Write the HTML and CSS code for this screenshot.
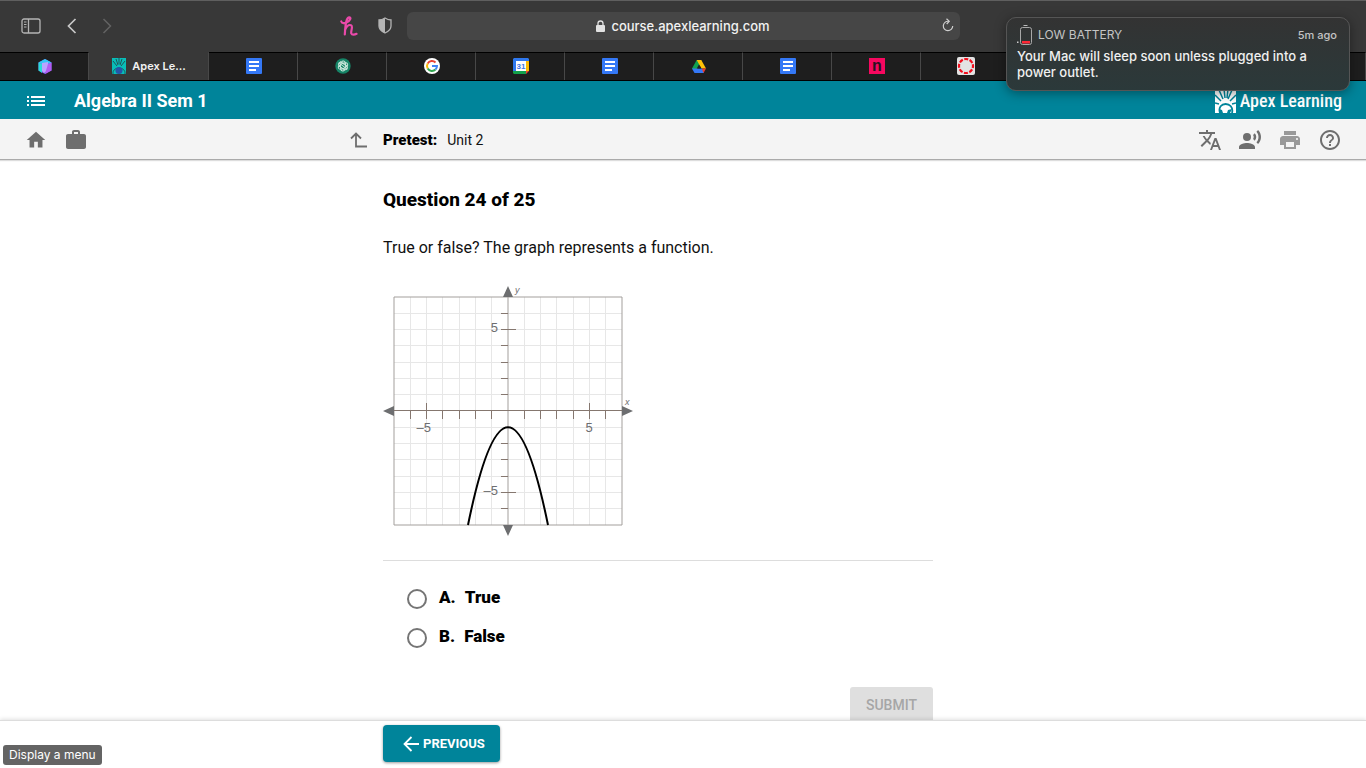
FILE: index.html
```html
<!DOCTYPE html>
<html lang="en">
<head>
<meta charset="utf-8">
<title>Apex Learning - Pretest: Unit 2</title>
<meta name="viewport" content="width=device-width, initial-scale=1">
<link rel="stylesheet" href="styles.css">
</head>
<body>
<svg class="defs" aria-hidden="true">
  <symbol id="docs" viewBox="0 0 16 16"><rect width="16" height="16" rx="1" fill="#3478f6"/><path d="M3 3h10v2H3zM3 7h10v2H3zM3 11h7v2H3z" fill="#fff"/></symbol>
</svg>

<header class="browser">
  <div class="toolbar">
    <div class="tools">
      <button class="tool" aria-label="Show sidebar"><svg width="20" height="16" viewBox="0 0 20 16" fill="none" stroke="#b4b4b4"><rect x="1" y="1" width="18" height="14" rx="2" stroke-width="1.3"/><path d="M7.500 1v14" stroke-width="1.3"/><path d="M3 4h2.500M3 6.500h2.500M3 9h2.500"/></svg></button>
      <button class="tool back" aria-label="Back"><svg width="10" height="16" viewBox="0 0 10 16" fill="none" stroke="#c8c8c8" stroke-width="1.700"><path d="M8.500 1L1.500 8l7 7"/></svg></button>
      <button class="tool forward" aria-label="Forward"><svg width="10" height="16" viewBox="0 0 10 16" fill="none" stroke="#626262" stroke-width="1.500"><path d="M1.500 1l7 7-7 7"/></svg></button>
      <button class="tool honey" aria-label="Honey"><svg width="18" height="20" viewBox="0 0 18 20" fill="none" stroke="#ea4aaa" stroke-width="2.200" stroke-linecap="round" stroke-linejoin="round"><path d="M1.300 5.500c.7 2 3.200 2.200 5.700.8 3-1.600 4.500-4.800 2.500-5C6.500 1 5.500 7 4.800 18.500M5 14c1.500-3.500 4-5.500 6-4.800 2.500 1-.5 6 .3 8.300.6 1.700 3.500 1.300 5.200.3" /></svg></button>
      <button class="tool shield" aria-label="Privacy report"><svg width="14" height="17" viewBox="0 0 14 17"><path d="M7 1c2 1.300 4 2 6 2v6c0 3-2.500 5.500-6 7-3.500-1.500-6-4-6-7V3c2 0 4-.7 6-2z" fill="none" stroke="#b4b4b4" stroke-width="1.300"/><path d="M7 1v15c-3.500-1.500-6-4-6-7V3c2 0 4-.7 6-2z" fill="#b4b4b4"/></svg></button>
    </div>
    <div class="address">
      <svg width="9" height="12" viewBox="0 0 9 12"><rect x="0" y="5" width="9" height="7" rx="1" fill="#e2e2e2"/><path d="M2 5V3.500a2.500 2.500 0 0 1 5 0V5" fill="none" stroke="#e2e2e2" stroke-width="1.300"/></svg>
      <span>course.apexlearning.com</span>
      <button class="tool reload" aria-label="Reload"><svg width="12" height="14" viewBox="0 0 12 14" fill="none" stroke="#cfcfcf" stroke-width="1.200"><path d="M6.500 3.300A4.700 4.700 0 1 0 10.700 8M4.500.8l2.700 2.500L4.700 6"/></svg></button>
    </div>
  </div>
  <nav class="tabs" aria-label="Tabs">
    <div class="tab"><svg width="14" height="15" viewBox="0 0 14 15"><path d="M7 0l6.500 3.500v8L7 15 .5 11.500v-8z" fill="#7a5cf0"/><path d="M7 0l6.500 3.500L7 6 .5 3.500z" fill="#35c8f5"/><path d="M.5 3.500L4 5v9L.5 11.500z" fill="#28dcd8"/><path d="M4 4l6-1v8l-4 3-2-2z" fill="#b9a4ff"/><path d="M10 5l3.500-1.500v8L7 15z" fill="#b25cf2"/></svg></div>
    <div class="tab active"><svg width="14" height="16" viewBox="0 0 14 16"><path fill="#08bdb8" d="M0 0h14v16H0z"/><path d="M1 3l4 5M4 1l2 6M7 0v6M10 1L8 7M13 3L9 8M1 16c-1-8 13-8 12 0" stroke="#20545a" fill="none"/><circle cx="7" cy="12.500" r="3.500" fill="#2754a8"/></svg><span>Apex Le...</span></div>
    <div class="tab"><svg width="16" height="16"><use href="#docs"/></svg></div>
    <div class="tab"><svg width="16" height="16" viewBox="0 0 16 16"><circle cx="8" cy="8" r="7.700" fill="#168467"/><g fill="none" stroke="#c7e6da" stroke-width="1"><ellipse cx="8" cy="8" rx="5" ry="2.500" transform="rotate(35 8 8)"/><ellipse cx="8" cy="8" rx="5" ry="2.500" transform="rotate(95 8 8)"/><ellipse cx="8" cy="8" rx="5" ry="2.500" transform="rotate(155 8 8)"/><path d="M4 5l8 6M5 3.500l7 5M4 8l6 4"/></g></svg></div>
    <div class="tab"><svg width="16" height="16" viewBox="0 0 16 16"><circle cx="8" cy="8" r="8" fill="#fff"/><g fill="none" stroke-width="2"><path d="M11.500 4.500A5 5 0 0 0 3.700 5.500" stroke="#ea4335"/><path d="M3.700 5.500a5 5 0 0 0 0 5" stroke="#fbbc05"/><path d="M3.700 10.500a5 5 0 0 0 7.800 1" stroke="#34a853"/><path d="M11.500 11.500A5 5 0 0 0 13 8H8" stroke="#4285f4"/></g></svg></div>
    <div class="tab"><svg width="16" height="16" viewBox="0 0 16 16"><path fill="#2f78ee" d="M1 0h14l1 1v3H3v9H0V1z"/><path fill="#fff" d="M3 3h10v10H3z"/><path fill="#fbbc04" d="M13 3h3v10h-3z"/><path fill="#13a04b" d="M0 13h13v3H1l-1-1z"/><path fill="#ea4335" d="M13 13h3l-3 3z"/><text class="day" x="8" y="11" text-anchor="middle">31</text></svg></div>
    <div class="tab"><svg width="16" height="16"><use href="#docs"/></svg></div>
    <div class="tab"><svg width="14" height="13" viewBox="0 0 14 13"><path fill="#12a150" d="M4.700 0H7l2 4-5.500 8L0 8.500z"/><path fill="#ffc107" d="M4.700 0h4.600L14 8.500H9.500z"/><path fill="#3478f6" d="M3.500 8.500h7L12 13H2.500L0 8.500z"/><path fill="#ea3b30" d="M9.700 8.500H14L11.500 13z"/><path fill="#1e1e1e" d="M7 4.500l2.300 4H4.700z"/></svg></div>
    <div class="tab"><svg width="16" height="16"><use href="#docs"/></svg></div>
    <div class="tab"><svg width="16" height="16" viewBox="0 0 16 16"><path fill="#f7085f" d="M0 0h16v16H0z"/><text class="nfl" x="8" y="13" text-anchor="middle">n</text></svg></div>
    <div class="tab"><svg width="18" height="18" viewBox="0 0 18 18"><rect width="18" height="18" rx="2" fill="#e3e3e3"/><circle cx="9" cy="9" r="7" fill="none" stroke="#f20d1c" stroke-width="2.200" stroke-dasharray="4 1.500" stroke-dashoffset="2"/></svg></div>
    <div class="tab"></div>
    <div class="tab"></div>
    <div class="tab"></div>
    <div class="tab"></div>
  </nav>
</header>

<div class="course-bar">
  <button class="icon-btn" aria-label="Display a menu"><svg width="18" height="10" viewBox="0 0 18 10" fill="#fff"><path d="M0 0h2v2H0zM4 0h14v2H4zM0 4h2v2H0zM4 4h14v2H4zM0 8h2v2H0zM4 8h14v2H4z"/></svg></button>
  <h1>Algebra II Sem 1</h1>
  <div class="brand">
    <svg width="21" height="24" viewBox="0 0 21 24"><path fill="#fff" d="M0 0h21v24H0z"/><g fill="none" stroke="#00849a"><path d="M5 24C1 12 20 12 17 24" stroke-width="1.800"/><path d="M0 6l6 6M4 1l4 9M9 0l1 9M13 0l-1 9M17 1l-4 9M21 6l-6 6M0 14l4 1M21 14l-4 1" stroke-width="1.500"/></g><path d="M5 24l-1-4 3 1 1 3zM12 24l1-3 4-1-2 4z" fill="#00849a"/></svg>
    <span>Apex Learning</span>
  </div>
</div>

<div class="page-bar">
  <div class="page-left">
    <button class="icon-btn" aria-label="Home"><svg width="24" height="24" viewBox="-1 -1 26 26"><path d="M10 20v-6h4v6h5v-8h3L12 3 2 12h3v8z"/></svg></button>
    <button class="icon-btn" aria-label="Portfolio"><svg width="24" height="24" viewBox="0 0 24 24"><path d="M20 6h-4V4c0-1.110-.89-2-2-2h-4c-1.110 0-2 .89-2 2v2H4c-1.110 0-2 .89-2 2v11c0 1.110.89 2 2 2h16c1.110 0 2-.89 2-2V8c0-1.110-.89-2-2-2zm-6 0h-4V4h4v2z"/></svg></button>
    <button class="icon-btn up" aria-label="Up one level"><svg width="18" height="16" viewBox="0 0 18 16" fill="none"><path d="M1 6.500L6 1.500l5 5M6 2v12.500h11" stroke="#6e6e6e" stroke-width="1.800"/></svg></button>
  </div>
  <div class="crumb"><strong>Pretest:</strong><span>Unit 2</span></div>
  <div class="page-right">
    <button class="icon-btn" aria-label="Translate"><svg width="24" height="24" viewBox="0 0 24 24"><path d="M12.870 15.070l-2.540-2.510.03-.03c1.740-1.940 2.980-4.170 3.710-6.530H17V4h-7V2H8v2H1v1.990h11.170C11.500 7.920 10.440 9.750 9 11.350 8.070 10.320 7.300 9.190 6.690 8h-2c.73 1.630 1.730 3.170 2.980 4.560l-5.090 5.020L4 19l5-5 3.110 3.110.76-2.040zM18.500 10h-2L12 22h2l1.120-3h4.750L21 22h2l-4.500-12zm-2.620 7l1.620-4.330L19.120 17h-3.240z"/></svg></button>
    <button class="icon-btn" aria-label="Read aloud"><svg width="24" height="24" viewBox="0 0 24 24"><circle cx="9" cy="9" r="4"/><path d="M9 15c-2.670 0-8 1.340-8 4v2h16v-2c0-2.660-5.330-4-8-4zm7.760-9.640l-1.680 1.690c.84 1.180.84 2.710 0 3.890l1.680 1.690c2.020-2.020 2.020-5.070 0-7.270zM20.070 2l-1.630 1.630c2.770 3.020 2.770 7.560 0 10.740L20.070 16c3.900-3.890 3.910-9.950 0-14z"/></svg></button>
    <button class="icon-btn pale" aria-label="Print"><svg width="24" height="24" viewBox="0 0 24 24"><path d="M19 8H5c-1.660 0-3 1.340-3 3v6h4v4h12v-4h4v-6c0-1.660-1.340-3-3-3zm-3 11H8v-5h8v5zm3-7c-.55 0-1-.45-1-1s.45-1 1-1 1 .45 1 1-.45 1-1 1zm-1-9H6v4h12V3z"/></svg></button>
    <button class="icon-btn" aria-label="Help"><svg width="24" height="24" viewBox="0 0 24 24"><path d="M11 18h2v-2h-2v2zm1-16C6.480 2 2 6.480 2 12s4.480 10 10 10 10-4.480 10-10S17.520 2 12 2zm0 18c-4.410 0-8-3.590-8-8s3.590-8 8-8 8 3.590 8 8-3.590 8-8 8zm0-14c-2.210 0-4 1.790-4 4h2c0-1.100.9-2 2-2s2 .9 2 2c0 2-3 1.750-3 5h2c0-2.250 3-2.500 3-5 0-2.210-1.790-4-4-4z"/></svg></button>
  </div>
</div>

<main class="content">
  <form class="question">
    <h2>Question 24 of 25</h2>
    <p>True or false? The graph represents a function.</p>
    <svg class="graph" width="252" height="252" viewBox="-125 -126 252 252" role="img" aria-label="Downward parabola with vertex at (0, -1)">
      <path class="grid" d="M-97.500-114v228M-81.500-114v228M-65.500-114v228M-48.500-114v228M-32.500-114v228M-16.500-114v228M16.500-114v228M32.500-114v228M48.500-114v228M65.500-114v228M81.500-114v228M97.500-114v228M-114-97.500h228M-114-81.500h228M-114-65.500h228M-114-48.500h228M-114-32.500h228M-114-16.500h228M-114 16.500h228M-114 32.500h228M-114 48.500h228M-114 65.500h228M-114 81.500h228M-114 97.500h228"/>
      <path class="frame" d="M-114-114h228v228h-228z"/>
      <path class="axis" d="M0-116v232"/>
      <path class="tick" d="M-116-.5h232M-97.500 0v8M-81.500-8v16M-65.500 0v8M-48.500 0v8M-32.500 0v8M-16.500 0v8M16.500 0v8M32.500 0v8M48.500 0v8M65.500 0v8M81.500-8v16M97.500 0v8M-7-97.500h7M-7-81.500h15M-7-65.500h7M-7-48.500h7M-7-32.500h7M-7-16.500h7M-7 32.500h7M-7 48.500h7M-7 65.500h7M-7 81.500h15M-7 97.500h7"/>
      <path class="arrow" d="M0-125l5 11H-5zM0 125l5-11H-5zM-125 0l11-5V5zM125 0l-11-5V5z"/>
      <path class="curve" d="M-40 114Q0-81.500 40 114"/>
      <text x="-10" y="-79" text-anchor="end">5</text>
      <text x="-10" y="84" text-anchor="end">–5</text>
      <text x="-77" y="21" text-anchor="end">–5</text>
      <text x="81" y="21" text-anchor="middle">5</text>
      <text class="name" x="7" y="-118">y</text>
      <text class="name" x="117" y="-6">x</text>
    </svg>
    <fieldset class="answers">
      <label><input type="radio" name="answer" value="true"><b>A.</b><b>True</b></label>
      <label><input type="radio" name="answer" value="false"><b>B.</b><b>False</b></label>
    </fieldset>
    <button class="submit" type="submit" disabled>SUBMIT</button>
  </form>
</main>

<footer class="pager">
  <div class="pager-inner">
    <button class="previous"><svg width="16" height="16" viewBox="0 0 16 16" fill="none" stroke="#fff" stroke-width="1.800"><path d="M8.500 1L1.500 8l7 7M1.500 8H16"/></svg><span>PREVIOUS</span></button>
  </div>
</footer>

<aside class="notice" role="alert">
  <div class="notice-head">
    <svg width="16" height="20" viewBox="0 0 16 20"><path d="M6.500.5h4" stroke="#bbb"/><rect x="3.500" y="2.500" width="11" height="17" rx="2" fill="none" stroke="#a8a8a8"/><rect x="5" y="16" width="8" height="2.500" fill="#ff2836"/><path d="M0 16.500h1.500v1.500H0z" fill="#ccc"/></svg>
    <span>LOW BATTERY</span><time>5m ago</time>
  </div>
  <p>Your Mac will sleep soon unless plugged into a power outlet.</p>
</aside>
<div class="status" role="status">Display a menu</div>
</body>
</html>
```

FILE: styles.css
```css
* { box-sizing: border-box; }

body {
  margin: 0;
  height: 100vh;
  display: flex;
  flex-direction: column;
  overflow: hidden;
  background: #fff;
  color: #111;
  font-family: Roboto, "Liberation Sans", sans-serif;
}

button {
  padding: 0;
  border: 0;
  background: none;
  font-family: inherit;
}

svg { display: block; flex: none; }
.defs { position: absolute; width: 0; height: 0; }

/* Browser chrome */
.browser {
  flex: none;
  background: #383838;
  border-top: 1px solid #5f5f5f;
  font-family: Inter, sans-serif;
}

.toolbar {
  display: grid;
  grid-template-columns: 1fr 553px 1fr;
  align-items: center;
  height: 51px;
  padding-bottom: 2px;
}

.tools { display: flex; align-items: center; padding: 0 15px 0 21px; }
.back { margin-left: 26px; }
.forward { margin-left: 25px; }
.honey { margin-left: auto; }
.shield { margin-left: 20px; }

.address {
  position: relative;
  display: flex;
  align-items: center;
  justify-content: center;
  gap: 6px;
  height: 28px;
  border-radius: 6px;
  background: #464646;
  color: #f2f2f2;
  font-size: 13px;
  font-weight: 500;
}

.reload { position: absolute; right: 6px; top: 6px; }

.tabs { display: flex; height: 29px; border-bottom: 1px solid #000; }

.tab {
  flex: 1 1 0;
  display: flex;
  align-items: center;
  justify-content: center;
  padding: 0 0 1px 1px;
  border-top: 1px solid #000;
  border-right: 1px solid #484848;
  background: #1e1e1e;
}

.tab.active {
  flex: 0 0 120px;
  gap: 6px;
  border-top-color: #383838;
  background: #383838;
  color: #f2f2f2;
  font-size: 11px;
  font-weight: 600;
}

.day { font: bold 8px "Liberation Sans", sans-serif; fill: #3b78e7; }
.nfl { font: bold 16px "Liberation Sans", sans-serif; fill: #2b1220; }

/* Course header */
.course-bar {
  flex: none;
  display: flex;
  align-items: center;
  height: 38px;
  padding: 1px 24px 0;
  background: #00849a;
  color: #fff;
}

.icon-btn {
  display: flex;
  align-items: center;
  justify-content: center;
  width: 24px;
  height: 24px;
  fill: #6e6e6e;
}

.course-bar h1 { margin: 0 auto 0 26px; font-size: 18px; line-height: 24px; font-weight: 700; }

.brand {
  display: flex;
  align-items: center;
  gap: 4px;
  font-family: "Roboto Condensed", "Open Sans Condensed", Roboto, sans-serif;
  font-size: 18px;
  font-weight: 500;
  line-height: 24px;
}

.page-bar {
  flex: none;
  display: grid;
  grid-template-columns: 1fr 600px 1fr;
  align-items: center;
  height: 41px;
  padding-top: 2px;
  border-bottom: 1px solid #aaa;
  background: #f4f4f4;
  box-shadow: 0 1px 1px #ddd;
}

.page-left { display: flex; gap: 16px; padding: 0 12px 0 24px; }
.page-left .up { margin-left: auto; }
.page-right { display: flex; justify-content: flex-end; gap: 16px; padding-right: 24px; }
.pale { fill: #999; }
.crumb { display: flex; gap: 10px; font-size: 14px; line-height: 20px; }
.crumb strong { color: #000; font-size: 15px; font-weight: 900; }

/* Question */
.content { flex: 1 1 0; min-height: 0; overflow: hidden; }

.question {
  width: 600px;
  max-width: 100%;
  margin: 0 auto;
  padding: 28px 50px 0 0;
  display: flex;
  flex-direction: column;
}

.question h2 { margin: 0; color: #000; font-size: 19px; line-height: 24px; font-weight: 800; }
.question p { margin: 24px 0 25px; font-size: 16px; line-height: 24px; }

.grid { stroke: #e7e7e7; fill: none; }
.frame { stroke: #a39f9c; fill: none; }
.axis { stroke: #a39f9c; }
.tick { stroke: #85776f; fill: none; }
.arrow { fill: #6d6e70; }
.curve { stroke: #000; stroke-width: 2; fill: none; }
.graph text { font: 13px "Liberation Sans", sans-serif; fill: #6d6e70; }
.graph .name { font-size: 9px; font-style: italic; }

.answers {
  display: flex;
  flex-direction: column;
  gap: 15px;
  margin: 23px 0 0;
  padding: 24px 24px 0;
  border: 0;
  border-top: 1px solid #ddd;
}

.answers label {
  display: flex;
  align-items: center;
  gap: 9px;
  color: #000;
  font-size: 17px;
  line-height: 24px;
}

.answers b { font-weight: 900; }

.answers input {
  appearance: none;
  width: 20px;
  height: 20px;
  margin: 4px 3px 0 0;
  border: 2px solid #757575;
  border-radius: 50%;
}

.submit {
  align-self: flex-end;
  margin-top: 39px;
  padding: 0 16px;
  border-radius: 3px;
  background: #dfdfdf;
  color: #a6a6a6;
  font-size: 14px;
  line-height: 36px;
  font-weight: 500;
}

.pager {
  flex: none;
  position: relative;
  height: 48px;
  border-top: 1px solid #ddd;
  background: #fff;
  box-shadow: 0 -1px 4px rgba(0, 0, 0, .12);
}

.pager-inner { width: 600px; max-width: 100%; margin: 0 auto; padding-top: 4px; }

.previous {
  display: flex;
  align-items: center;
  gap: 4px;
  height: 37px;
  padding: 0 15px 0 20px;
  border-radius: 4px;
  background: #00849a;
  box-shadow: 0 1px 3px rgba(0, 0, 0, .4);
  color: #fff;
  font-size: 13px;
  font-weight: 700;
}

/* Overlays */
.notice {
  position: absolute;
  top: 17px;
  right: 16px;
  width: 344px;
  height: 74px;
  padding: 7px 12px 0 10px;
  border: 1px solid #555;
  border-radius: 10px;
  background: linear-gradient(#333, #2b393a);
  box-shadow: 0 2px 12px rgba(0, 0, 0, .4);
  color: #f0f0f0;
  font: 500 13px/16px Inter, sans-serif;
}

.notice-head { display: flex; align-items: center; gap: 5px; height: 20px; color: #c4c4c4; font-size: 12px; font-weight: 400; }
.notice time { margin-left: auto; font-size: 11px; font-weight: 500; }
.notice p { margin: 3px 0 0; }

.status {
  position: absolute;
  left: 3px;
  bottom: 3px;
  padding: 0 6px;
  border-radius: 3px;
  background: #646464;
  color: #fff;
  font: 12px/20px Inter, sans-serif;
}
```
